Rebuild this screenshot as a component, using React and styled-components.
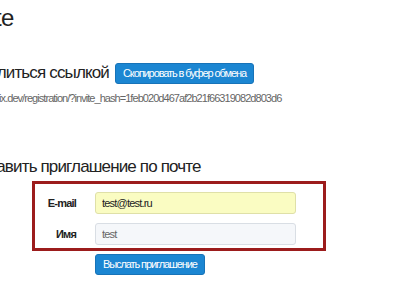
import React from 'react';
import styled, { createGlobalStyle } from 'styled-components';

const GlobalStyle = createGlobalStyle`
    html, body {
        margin: 0;
        padding: 0;
        background: #ffffff;
        overflow: hidden;
    }
    body {
        font-family: 'Liberation Sans', Arial, sans-serif;
        color: #222;
    }
`;

const OFFSET = 40;

const Page = styled.div`
    width: 403px;
    height: 294px;
    overflow: hidden;
`;

const Content = styled.div`
    margin-left: -${OFFSET}px;
    padding-top: 4px;
`;

const Title = styled.h1`
    margin: 0;
    font-size: 24px;
    font-weight: normal;
    letter-spacing: -0.6px;
    line-height: 28px;
    color: #222;
`;

const ShareRow = styled.div`
    display: flex;
    align-items: center;
    gap: 6px;
    margin-top: 30px;
`;

const SectionTitle = styled.h3`
    margin: 0;
    font-size: 17px;
    font-weight: normal;
    letter-spacing: -0.85px;
    line-height: 22px;
    color: #222;
`;

const Button = styled.button`
    font-family: 'Liberation Sans', Arial, sans-serif;
    font-size: 11px;
    letter-spacing: -1.1px;
    color: #fff;
    background: #1b86d2;
    border: 1px solid #1773b8;
    border-radius: 3px;
    padding: 0 7px;
    height: 21px;
    line-height: 19px;
    cursor: pointer;
`;

const Link = styled.div`
    margin-top: 7px;
    font-size: 11px;
    letter-spacing: -0.95px;
    color: #666;
    line-height: 14px;
`;

const MailTitle = styled(SectionTitle)`
    margin-top: 51px;
`;

const FormBox = styled.div`
    margin-top: 3px;
    margin-left: ${OFFSET + 32}px;
    width: 288px;
    border: 3px solid #9c1c1c;
    padding: 8px 0 3px;
    display: grid;
    grid-template-columns: 41px 201px;
    column-gap: 19px;
    row-gap: 9px;
    align-items: center;
`;

const Label = styled.label`
    font-size: 11px;
    font-weight: bold;
    letter-spacing: -0.8px;
    color: #222;
    text-align: right;
`;

const Input = styled.input`
    box-sizing: border-box;
    width: 201px;
    height: 22px;
    padding: 0 6px;
    font-family: 'Liberation Sans', Arial, sans-serif;
    font-size: 11px;
    letter-spacing: -0.8px;
    color: ${p => (p.$filled ? '#222' : '#666')};
    background: ${p => (p.$filled ? '#fafcc2' : '#f5f7fa')};
    border: 1px solid ${p => (p.$filled ? '#dfe0a8' : '#d9dee4')};
    border-radius: 3px;
    outline: none;
`;

const Actions = styled.div`
    margin-top: 3px;
    margin-left: ${OFFSET + 95}px;
`;

export default function App() {
    return (
        <Page>
            <GlobalStyle />
            <Content>
                <Title>Invite</Title>
                <ShareRow>
                    <SectionTitle>Поделиться ссылкой</SectionTitle>
                    <Button>Скопировать в буфер обмена</Button>
                </ShareRow>
                <Link>http://prodix.dev/registration/?invite_hash=1feb020d467af2b21f66319082d803d6</Link>
                <MailTitle>Отправить приглашение по почте</MailTitle>
                <FormBox>
                    <Label>E-mail</Label>
                    <Input $filled defaultValue="test@test.ru" />
                    <Label>Имя</Label>
                    <Input defaultValue="test" />
                </FormBox>
                <Actions>
                    <Button>Выслать приглашение</Button>
                </Actions>
            </Content>
        </Page>
    );
}
